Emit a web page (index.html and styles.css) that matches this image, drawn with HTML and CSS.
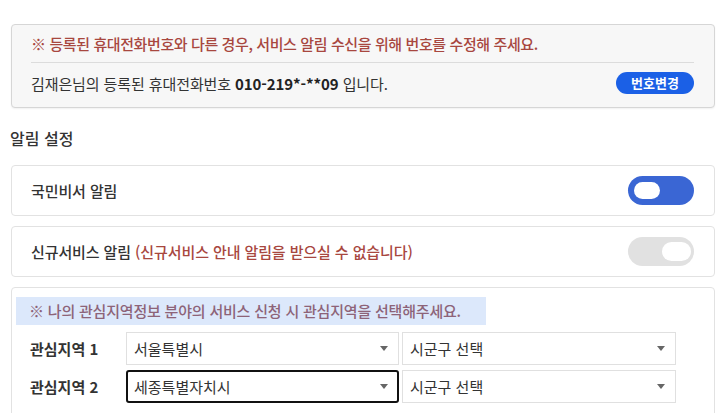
FILE: index.html
```html
<!DOCTYPE html>
<html lang="ko">
<head>
<meta charset="utf-8">
<link rel="stylesheet" href="styles.css">
</head>
<body>
<div class="page">
  <div class="phone-box">
    <p class="warn">※ 등록된 휴대전화번호와 다른 경우, 서비스 알림 수신을 위해 번호를 수정해 주세요.</p>
    <div class="phone-row">
      <span>김재은님의 등록된 휴대전화번호 <b>010-219*-**09</b> 입니다.</span>
      <button class="btn-change">번호변경</button>
    </div>
  </div>

  <h2 class="section-title">알림 설정</h2>

  <div class="setting-row">
    <span class="setting-label">국민비서 알림</span>
    <span class="toggle on"><span class="knob"></span></span>
  </div>
  <div class="setting-row">
    <span class="setting-label">신규서비스 알림 <span class="note">(신규서비스 안내 알림을 받으실 수 없습니다)</span></span>
    <span class="toggle off"><span class="knob"></span></span>
  </div>

  <div class="region-box">
    <p class="region-notice">※ 나의 관심지역정보 분야의 서비스 신청 시 관심지역을 선택해주세요.</p>
    <div class="region-row">
      <span class="region-label">관심지역 1</span>
      <div class="select"><span>서울특별시</span><span class="arrow"></span></div>
      <div class="select wide"><span>시군구 선택</span><span class="arrow"></span></div>
    </div>
    <div class="region-row">
      <span class="region-label">관심지역 2</span>
      <div class="select focused"><span>세종특별자치시</span><span class="arrow"></span></div>
      <div class="select wide"><span>시군구 선택</span><span class="arrow"></span></div>
    </div>
  </div>
</div>
</body>
</html>
```

FILE: styles.css
```css
* { box-sizing: border-box; }
html, body { margin: 0; padding: 0; background: #fff; }
body {
  font-family: "Noto Sans CJK KR", "Noto Sans", sans-serif;
  color: #333;
  font-size: 15px;
}
.page {
  padding: 24px 5px 0 11px;
}
.phone-box {
  background: #f7f7f7;
  border: 1px solid #d6d6d6;
  border-radius: 4px;
  padding: 8px 20px 13px 19px;
  box-shadow: 0 1px 2px rgba(0,0,0,0.06);
}
.warn {
  margin: 0;
  height: 22px;
  line-height: 22px;
  color: #a8473f;
  font-weight: 500;
  font-size: 15px;
  letter-spacing: -0.4px;
  border-bottom: 1px solid #dcdcdc;
  box-sizing: content-box;
  padding-bottom: 7px;
}
.phone-row {
  display: flex;
  justify-content: space-between;
  align-items: center;
  padding-top: 9px;
  letter-spacing: -0.1px;
  color: #333;
}
.phone-row b { font-weight: 700; color: #222; }
.btn-change {
  font-family: inherit;
  background: #1b60e6;
  color: #fff;
  border: none;
  border-radius: 11px;
  font-size: 13px;
  font-weight: 700;
  height: 22px;
  width: 78px;
  padding: 0;
  line-height: 22px;
}
.section-title {
  margin: 17px 0 14px -1px;
  font-size: 16px;
  font-weight: 500;
  color: #333;
  line-height: 26px;
}
.setting-row {
  display: flex;
  justify-content: space-between;
  align-items: center;
  height: 51px;
  border: 1px solid #e2e2e2;
  border-radius: 4px;
  padding: 0 20px 0 19px;
  margin-bottom: 10px;
}
.setting-label {
  font-weight: 500;
  color: #333;
  letter-spacing: -0.1px;
}
.note { color: #a8473f; font-weight: 500; }
.toggle {
  position: relative;
  width: 66px;
  height: 29px;
  border-radius: 15px;
  display: block;
}
.toggle.on { background: #3a66d4; }
.toggle.off { background: #e1e1e1; }
.knob {
  position: absolute;
  top: 6px;
  width: 26px;
  height: 17px;
  border-radius: 9px;
  background: #fff;
}
.toggle.on .knob { left: 6px; }
.toggle.off .knob { right: 3px; top: 5px; width: 29px; height: 19px; border-radius: 10px; }
.region-box {
  border: 1px solid #e2e2e2;
  border-radius: 4px;
  padding: 9px 30px 20px 4px;
  height: 140px;
}
.region-notice {
  margin: 0 0 7px 0;
  display: inline-block;
  background: #dce8fb;
  color: #8d6378;
  height: 28px;
  line-height: 28px;
  padding: 0 25px 0 13px;
  font-size: 15px;
  letter-spacing: -0.2px;
  font-weight: 500;
}
.region-row {
  display: flex;
  align-items: center;
  margin-bottom: 5px;
}
.region-label {
  width: 110px;
  flex-shrink: 0;
  padding-left: 14px;
  font-weight: 700;
  color: #333;
}
.select {
  display: flex;
  align-items: center;
  justify-content: space-between;
  width: 273px;
  flex-shrink: 0;
  height: 33px;
  border: 1px solid #e0e0e0;
  padding: 0 10px 0 7px;
  color: #333;
  font-size: 15px;
  margin-right: 3px;
}
.select.wide { width: 274px; }
.select.focused {
  border: 2px solid #111;
  border-radius: 3px;
  padding: 0 9px 0 6px;
}
.arrow {
  width: 0;
  height: 0;
  border-left: 4px solid transparent;
  border-right: 4px solid transparent;
  border-top: 5px solid #666;
}
```
